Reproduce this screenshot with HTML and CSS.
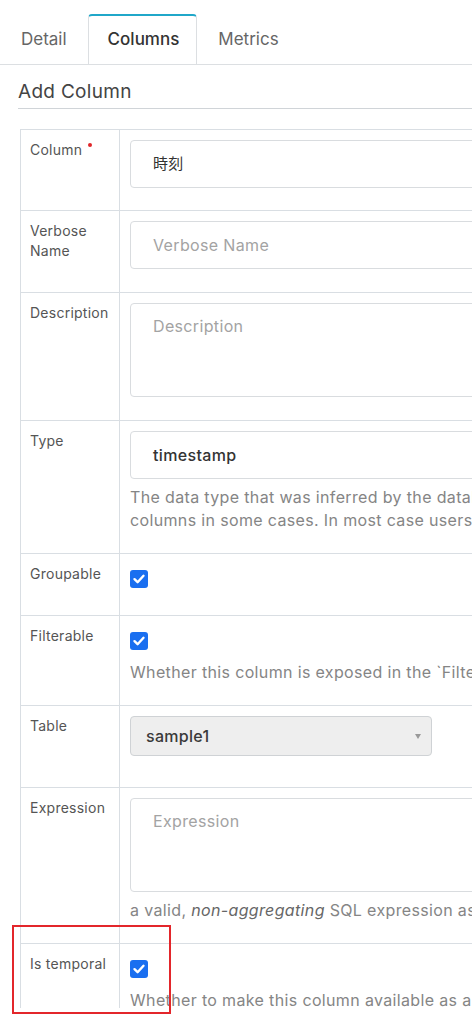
FILE: index.html
```html
<!DOCTYPE html>
<html>
<head>
<meta charset="utf-8">
<link rel="stylesheet" href="styles.css">
</head>
<body>
<div class="page">
 <div class="content">
  <div class="tabs">
    <div class="tab">Detail</div>
    <div class="tab active">Columns</div>
    <div class="tab">Metrics</div>
  </div>
  <div class="section-title">Add Column</div>
  <div class="form">
    <div class="row">
      <div class="label">Column <span class="req"></span></div>
      <div class="field"><div class="input value cjk">時刻</div></div>
    </div>
    <div class="row">
      <div class="label">Verbose<br>Name</div>
      <div class="field plus"><div class="input placeholder">Verbose Name</div></div>
    </div>
    <div class="row">
      <div class="label">Description</div>
      <div class="field plus"><div class="textarea placeholder">Description</div></div>
    </div>
    <div class="row">
      <div class="label">Type</div>
      <div class="field">
        <div class="input value strong">timestamp</div>
        <div class="help two">The data type that was inferred by the database. It may be necessary to input a type manually for<br>columns in some cases. In most case users should not need to alter this.</div>
      </div>
    </div>
    <div class="row">
      <div class="label">Groupable</div>
      <div class="field compact"><div class="check-line"><span class="checkbox"><svg viewBox="0 0 18 18" width="18" height="18"><path d="M4.5 9.2 L7.6 12.2 L13.5 5.8" fill="none" stroke="#fff" stroke-width="2.4" stroke-linecap="round" stroke-linejoin="round"/></svg></span></div></div>
    </div>
    <div class="row">
      <div class="label">Filterable</div>
      <div class="field">
        <div class="check-line"><span class="checkbox"><svg viewBox="0 0 18 18" width="18" height="18"><path d="M4.5 9.2 L7.6 12.2 L13.5 5.8" fill="none" stroke="#fff" stroke-width="2.4" stroke-linecap="round" stroke-linejoin="round"/></svg></span></div>
        <div class="help tight">Whether this column is exposed in the `Filters` section of the explore view.</div>
      </div>
    </div>
    <div class="row">
      <div class="label">Table</div>
      <div class="field plus">
        <div class="select"><span>sample1</span><span class="caret"></span></div>
      </div>
    </div>
    <div class="row">
      <div class="label">Expression</div>
      <div class="field">
        <div class="textarea placeholder">Expression</div>
        <div class="help">a valid, <em>non-aggregating</em> SQL expression as supported by the underlying backend. Example: `substr(name, 1, 1)`</div>
      </div>
    </div>
    <div class="row">
      <div class="label">Is temporal</div>
      <div class="field">
        <div class="check-line"><span class="checkbox"><svg viewBox="0 0 18 18" width="18" height="18"><path d="M4.5 9.2 L7.6 12.2 L13.5 5.8" fill="none" stroke="#fff" stroke-width="2.4" stroke-linecap="round" stroke-linejoin="round"/></svg></span></div>
        <div class="help tight">Whether to make this column available as a [Time Granularity] option, column has to be DATETIME or DATETIME-like</div>
      </div>
    </div>
  </div>
 </div>
  <div class="highlight"></div>
</div>
</body>
</html>
```
FILE: styles.css
```css
html, body {
  margin: 0;
  padding: 0;
  background: #fff;
}
body {
  font-family: Inter, "Noto Sans CJK JP", sans-serif;
  color: #444;
  overflow: hidden;
}
.page {
  position: relative;
  width: 472px;
  height: 1024px;
  overflow: hidden;
}
.content {
  height: 1008px;
  overflow: hidden;
}
.tabs {
  display: flex;
  height: 65px;
  box-sizing: border-box;
  padding-top: 14px;
  border-bottom: 1px solid #dcdfe2;
}
.tab {
  box-sizing: border-box;
  height: 51px;
  padding: 0 21px 2px 20px;
  display: flex;
  align-items: center;
  font-size: 17px;
  color: #666;
  border: 1px solid transparent;
  border-top: 2px solid transparent;
}
.tab:first-child { padding-right: 20px; }
.tab.active {
  color: #333;
  font-weight: 500;
  background: #fff;
  border-color: #dcdfe2;
  border-top-color: #20a7c9;
  border-radius: 4px 4px 0 0;
  padding: 0 17px 2px 19px;
}
.section-title {
  margin: 0 0 20px 18px;
  height: 44px;
  box-sizing: border-box;
  padding-top: 15px;
  font-size: 19px;
  letter-spacing: 0.3px;
  color: #444;
  border-bottom: 1px solid #d0d4d8;
}
.form {
  margin-left: 20px;
  width: 700px;
  border-top: 1px solid #d9dee3;
  border-left: 1px solid #d9dee3;
}
.row {
  display: grid;
  grid-template-columns: 99px 1fr;
  border-bottom: 1px solid #d9dee3;
}
.label {
  padding: 10px 9px;
  font-size: 14px;
  letter-spacing: 0.25px;
  line-height: 20px;
  color: #555;
  border-right: 1px solid #d9dee3;
}
.req {
  display: inline-block;
  width: 4px;
  height: 4px;
  border-radius: 50%;
  background: #e0262a;
  vertical-align: 8px;
  margin-left: 1px;
}
.field {
  padding: 10px 10px 22px 10px;
}
.field.compact { padding-bottom: 21px; }
.field.plus { padding-bottom: 23px; }
.input, .textarea {
  box-sizing: border-box;
  border: 1px solid #d9dcdf;
  border-radius: 4px;
  padding: 0 22px;
  font-size: 16px;
  letter-spacing: 0.35px;
}
.input {
  height: 48px;
  line-height: 46px;
}
.textarea {
  height: 94px;
  padding-top: 11px;
  line-height: 22px;
}
.placeholder { color: #a3a3a3; }
.value { color: #333; }
.strong { font-weight: 500; }
.cjk { font-size: 15px; }
.help {
  margin-top: 7px;
  font-size: 16px;
  letter-spacing: 0.35px;
  line-height: 22px;
  color: #858585;
  white-space: nowrap;
}
.help.two { line-height: 22.5px; }
.help.tight { margin-top: 5px; }
.help em { color: #666; }
.check-line {
  height: 30px;
  display: flex;
  align-items: center;
}
.checkbox {
  width: 18px;
  height: 18px;
  border-radius: 3px;
  background: #1a6ff0;
  display: inline-flex;
}
.select {
  box-sizing: border-box;
  width: 302px;
  height: 40px;
  background: #eeeeee;
  border: 1px solid #cfd2d5;
  border-radius: 4px;
  padding: 0 10px 0 15px;
  display: flex;
  align-items: center;
  justify-content: space-between;
  font-size: 16px;
  letter-spacing: 0.3px;
  font-weight: 500;
  color: #3a3a3a;
  margin-bottom: 8px;
}
.caret {
  width: 0;
  height: 0;
  border-left: 3px solid transparent;
  border-right: 3px solid transparent;
  border-top: 5px solid #999;
}
.highlight {
  position: absolute;
  left: 12px;
  top: 925px;
  width: 159px;
  height: 89px;
  box-sizing: border-box;
  border: 2px solid #e3262b;
}
```
